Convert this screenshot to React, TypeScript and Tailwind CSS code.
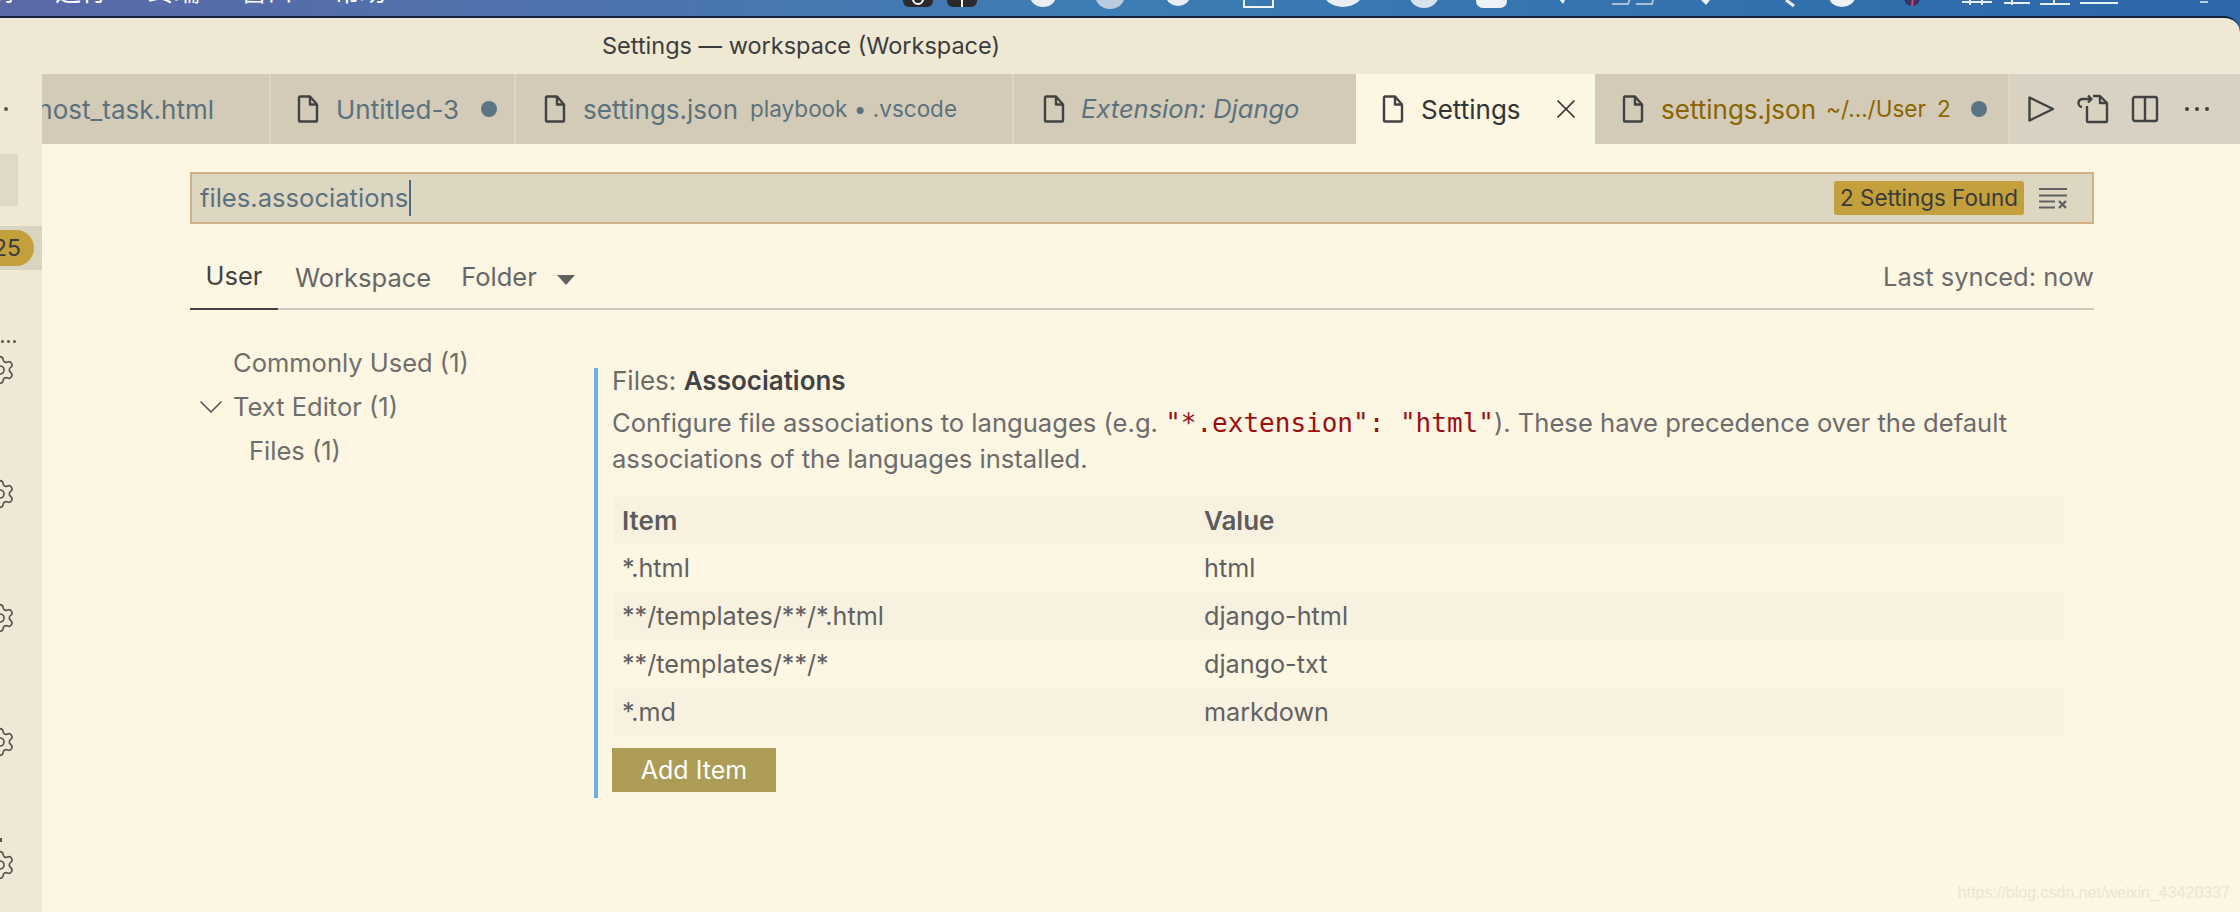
import { Settings as Gear, ChevronDown, X } from "lucide-react";

const FONT = "font-['Inter','Noto_Sans_CJK_SC',sans-serif]";

function FileIcon() {
  return (
    <svg width="22" height="28" viewBox="0 0 22 28" fill="none" stroke="#424242" strokeWidth="2.4" strokeLinejoin="round" className="shrink-0">
      <path d="M2 2.5a1 1 0 0 1 1-1h10l7 8V25.5a1 1 0 0 1-1 1H3a1 1 0 0 1-1-1z" />
      <path d="M13 1.5V9.5h7" />
    </svg>
  );
}

function Dot() {
  return <span className="block size-4 shrink-0 rounded-full bg-[#5b7582]" />;
}

function Gears() {
  return <Gear size={32} strokeWidth={1.25} color="#55554f" className="-ml-4 shrink-0" />;
}

const rows: [string, string, boolean][] = [
  ["*.html", "html", false],
  ["**/templates/**/*.html", "django-html", true],
  ["**/templates/**/*", "django-txt", false],
  ["*.md", "markdown", true],
];

export default function App() {
  return (
    <div className={`${FONT} h-[912px] w-[2240px] overflow-hidden bg-gradient-to-r from-[#5a68a6] via-[#3c7db5] to-[#2c67a8]`}>
      <div className="relative flex h-4 gap-[41px] overflow-hidden pl-0 text-white">
        {["转到", "运行", "终端", "窗口", "帮助"].map((t, i) => (
          <span key={t} className={`-mt-[23px] h-[30px] shrink-0 text-[26px] leading-[30px] ${i === 0 ? "-ml-[38px]" : ""}`}>{t}</span>
        ))}
        <svg width="2240" height="16" viewBox="0 0 2240 16" className="absolute left-0 top-0">
          <rect x="903" y="-12" width="30" height="19" rx="6" fill="#2a2a2c" />
          <circle cx="918" cy="-1" r="5" fill="none" stroke="#fff" strokeWidth="2" />
          <rect x="947" y="-12" width="30" height="19" rx="6" fill="#2a2a2c" />
          <rect x="961" y="-4" width="2" height="11" fill="#fff" />
          <ellipse cx="1043" cy="-4" rx="13" ry="11" fill="#e8eef3" />
          <ellipse cx="1110" cy="-5" rx="15" ry="14" fill="#b9cbdd" />
          <ellipse cx="1178" cy="-4" rx="12" ry="10" fill="#e8eef3" />
          <rect x="1244" y="-6" width="29" height="13" fill="none" stroke="#f2f5f8" strokeWidth="2" />
          <ellipse cx="1343" cy="-8" rx="20" ry="15" fill="#e8eef3" />
          <ellipse cx="1424" cy="-6" rx="15" ry="14" fill="#d8e3ee" />
          <rect x="1476" y="-12" width="31" height="20" rx="7" fill="#eef2f6" />
          <path d="M1558 -2l8 0-3 6z" fill="#eef2f6" />
          <path d="M1612 4h16l3-8M1636 4h16l2-8" fill="none" stroke="#a9bfd6" strokeWidth="2" />
          <path d="M1701 0h9l-4 5z" fill="#eef2f6" />
          <path d="M1786 0l8 6" stroke="#eef2f6" strokeWidth="3" />
          <ellipse cx="1842" cy="-3" rx="13" ry="10" fill="#eef2f6" />
          <ellipse cx="1912" cy="-2" rx="8" ry="8" fill="#3d2f6b" />
          <path d="M1913 -2l-1 8" stroke="#d0506a" strokeWidth="2" />
          <path d="M1962 2h30M1970 0v5M1982 0v5M2004 3h26M2012 0v5M2040 4h30M2054 0v5M2080 3h38" stroke="#e8eef3" strokeWidth="2" />
          <path d="M2200 2h8" stroke="#b9cbdd" strokeWidth="2" />
        </svg>
      </div>

      <div className="flex h-[896px] flex-col rounded-tr-[16px] border-t-2 border-[#15233a] bg-[#eee8d5]">
        <div className="flex h-[56px] shrink-0 items-center pl-[602px] text-[23.5px] text-[#3c3c3c]">Settings — workspace (Workspace)</div>

        <div className="flex min-h-0 flex-1">
          {/* activity / side strip */}
          <aside className="flex w-[42px] shrink-0 flex-col overflow-hidden">
            <div className="flex h-[70px] shrink-0 items-center pl-[4px]">
              <span className="size-1 rounded-full bg-[#555]" />
            </div>
            <div className="mt-[10px] h-[52px] w-[18px] shrink-0 bg-[#dfd9c5]" />
            <div className="mt-[20px] flex h-[44px] shrink-0 items-center bg-[#d8d4c2]">
              <span className="-ml-[20px] flex h-9 w-[54px] items-center justify-end rounded-full bg-[#c3a03c] pr-[13px] text-[23px] text-[#3c3c3c]">25</span>
            </div>
            <div className="mt-[70px] flex h-1 shrink-0 gap-[3px] pl-[1px]">
              {[0, 1, 2].map((i) => <span key={i} className="size-[3px] rounded-full bg-[#55554f]" />)}
            </div>
            <div className="mt-[10px] flex shrink-0 flex-col gap-[92px]">
              <Gears /><Gears /><Gears /><Gears />
            </div>
            <span className="mt-[80px] h-1 w-[2px] shrink-0 bg-[#55554f]" />
            <div className="mt-[7px] shrink-0"><Gears /></div>
          </aside>

          <main className="flex min-w-0 flex-1 flex-col bg-[#fdf6e3]">
            {/* tabs */}
            <div className="flex h-[70px] shrink-0 text-[26px] text-[#5b727e]">
              <div className="flex w-[229px] items-center justify-end overflow-hidden whitespace-nowrap border-r-2 border-[#ddd6c1] bg-[#d3cbb7] pr-[55px]">host_task.html</div>
              <div className="flex w-[245px] items-center border-r-2 border-[#ddd6c1] bg-[#d3cbb7] pl-[26px]">
                <FileIcon /><span className="ml-[17px]">Untitled-3</span><span className="ml-[22px]"><Dot /></span>
              </div>
              <div className="flex w-[498px] items-center whitespace-nowrap border-r-2 border-[#ddd6c1] bg-[#d3cbb7] pl-[28px]">
                <FileIcon /><span className="ml-[17px]">settings.json</span><span className="ml-[12px] text-[22.5px]">playbook • .vscode</span>
              </div>
              <div className="flex w-[342px] items-center whitespace-nowrap bg-[#d3cbb7] pl-[29px] text-[25.5px] italic">
                <FileIcon /><span className="ml-4">Extension: Django</span>
              </div>
              <div className="flex w-[239px] items-center bg-[#fdf6e3] pl-[26px] text-[#333]">
                <FileIcon /><span className="ml-[17px]">Settings</span>
                <X size={32} strokeWidth={1.3} className="ml-[29px]" color="#333" />
              </div>
              <div className="flex w-[413px] items-center whitespace-nowrap bg-[#d3cbb7] pl-[27px] text-[#8a6500]">
                <FileIcon /><span className="ml-[17px]">settings.json</span>
                <span className="ml-[10px] text-[22.500px]">~/.../User</span>
                <span className="ml-[11px] text-[22.500px]">2</span>
                <span className="ml-[20px]"><Dot /></span>
              </div>
              <div className="flex flex-1 items-center border-l-2 border-[#ddd6c1] bg-[#d9d2c2] pl-[17px]">
                <svg width="28" height="28" viewBox="0 0 28 28" fill="none" stroke="#424242" strokeWidth="2.4" strokeLinejoin="round"><path d="M2.5 2.5v23L26 14z" /></svg>
                <svg width="32" height="30" viewBox="0 0 32 30" fill="none" stroke="#424242" strokeWidth="2.4" strokeLinejoin="round" className="ml-[22px]">
                  <path d="M10 12v15a1 1 0 0 0 1 1h18a1 1 0 0 0 1-1V9l-7-7h-7" /><path d="M23 2v7h7" />
                  <path d="M14 5H6a4 4 0 0 0-1 8M11 1.500 14.500 5 11 8.500" />
                </svg>
                <svg width="28" height="28" viewBox="0 0 28 28" fill="none" stroke="#424242" strokeWidth="2.4" className="ml-[22px]">
                  <rect x="2" y="2" width="24" height="24" rx="2" /><path d="M14 2v24" />
                </svg>
                <div className="ml-[26px] flex gap-[6px]">
                  {[0, 1, 2].map((i) => <span key={i} className="size-1 rounded-full bg-[#424242]" />)}
                </div>
              </div>
            </div>

            {/* settings editor */}
            <div className="relative flex flex-1 flex-col pl-[148px] pr-[146px] pt-[28px]">
              <div className="flex h-[52px] shrink-0 items-center border-2 border-[#d3af86] bg-[#ddd6c1] pl-[8px] pr-[24px] text-[25.6px] text-[#5b727e]">
                <span className="pt-px">files.associations</span>
                <span className="ml-px h-[36px] w-[2px] bg-[#4f6b78]" />
                <span className="ml-auto flex h-[34px] items-center rounded-[3px] bg-[#c3a03c] px-[6px] text-[22.4px] text-[#3a3a3a]">2 Settings Found</span>
                <svg width="30" height="22" viewBox="0 0 30 22" fill="none" stroke="#616161" strokeWidth="2" className="ml-[14px]">
                  <path d="M1 2h28M1 8.500h28M1 14.500h16M1 20.500h16" />
                  <path d="M21 14l7 7M28 14l-7 7" strokeWidth="2.400" />
                </svg>
              </div>

              <div className="flex h-[86px] shrink-0 border-b-2 border-[#cbc8c0] text-[25.5px]">
                <div className="relative flex w-[88px] items-center justify-center pt-[21px] text-[#424242]">
                  User
                  <span className="absolute -bottom-[2px] left-0 right-0 h-[2px] bg-[#444]" />
                </div>
                <div className="ml-[17px] flex items-center pt-[24px] text-[#666]">Workspace</div>
                <div className="ml-[30px] flex items-center pt-[22px] text-[#666]">
                  Folder
                  <svg width="18" height="10" viewBox="0 0 18 10" className="ml-[20px] mt-[6px]"><path d="M0 0h18L9 10z" fill="#616161" /></svg>
                </div>
                <div className="ml-auto flex items-center pt-[22px] text-[#6b6b6b]">Last synced: now</div>
              </div>

              <div className="flex flex-1">
                <nav className="w-[404px] shrink-0 pt-[31px] text-[25.5px] text-[#6e6e6a]">
                  <div className="flex h-[44px] items-center pl-[43px]">Commonly Used (1)</div>
                  <div className="flex h-[44px] items-center pl-[1px]">
                    <ChevronDown size={40} strokeWidth={1} color="#555" className="mr-[2px]" />
                    Text Editor (1)
                  </div>
                  <div className="flex h-[44px] items-center pl-[59px]">Files (1)</div>
                </nav>

                <section className="mt-[58px] h-[430px] flex-1 border-l-4 border-[#6cafe3] pl-[14px]">
                  <div className="h-[26px] text-[26px] leading-[26px] text-[#6c6c66]">Files: <b className="font-semibold text-[#424242]">Associations</b></div>
                  <div className="mt-[11px] text-[25.6px] leading-[36px] text-[#6c6c6c]">
                    <div className="whitespace-nowrap">
                      Configure file associations to languages (e.g. <code className="font-['DejaVu_Sans_Mono',monospace] text-[26px] text-[#9b0f0f]">"*.extension": "html"</code>). These have precedence over the default
                    </div>
                    <div>associations of the languages installed.</div>
                  </div>
                  <div className="ml-[2px] mt-[19px] w-[1450px] text-[25.2px] text-[#616161]">
                    <div className="grid h-[48px] grid-cols-[582px_1fr] items-center bg-[#f8f1df] pl-[8px] text-[26px] font-semibold text-[#5c5c5c]">
                      <span>Item</span><span>Value</span>
                    </div>
                    {rows.map(([k, v, alt]) => (
                      <div key={k} className={`grid h-[48px] grid-cols-[582px_1fr] items-center pl-[8px] pt-[2px] ${alt ? "bg-[#f8f1df]" : ""}`}>
                        <span>{k}</span><span>{v}</span>
                      </div>
                    ))}
                  </div>
                  <button className="mt-[12px] h-[44px] w-[164px] bg-[#ad9c55] pt-px text-[25px] text-white">Add Item</button>
                </section>
              </div>

              <span className="absolute bottom-[7px] right-[10px] font-['Liberation_Sans',sans-serif] text-[16px] leading-[24px] text-[#ebe5d4]">https://blog.csdn.net/weixin_43420337</span>
            </div>
          </main>
        </div>
      </div>
    </div>
  );
}
